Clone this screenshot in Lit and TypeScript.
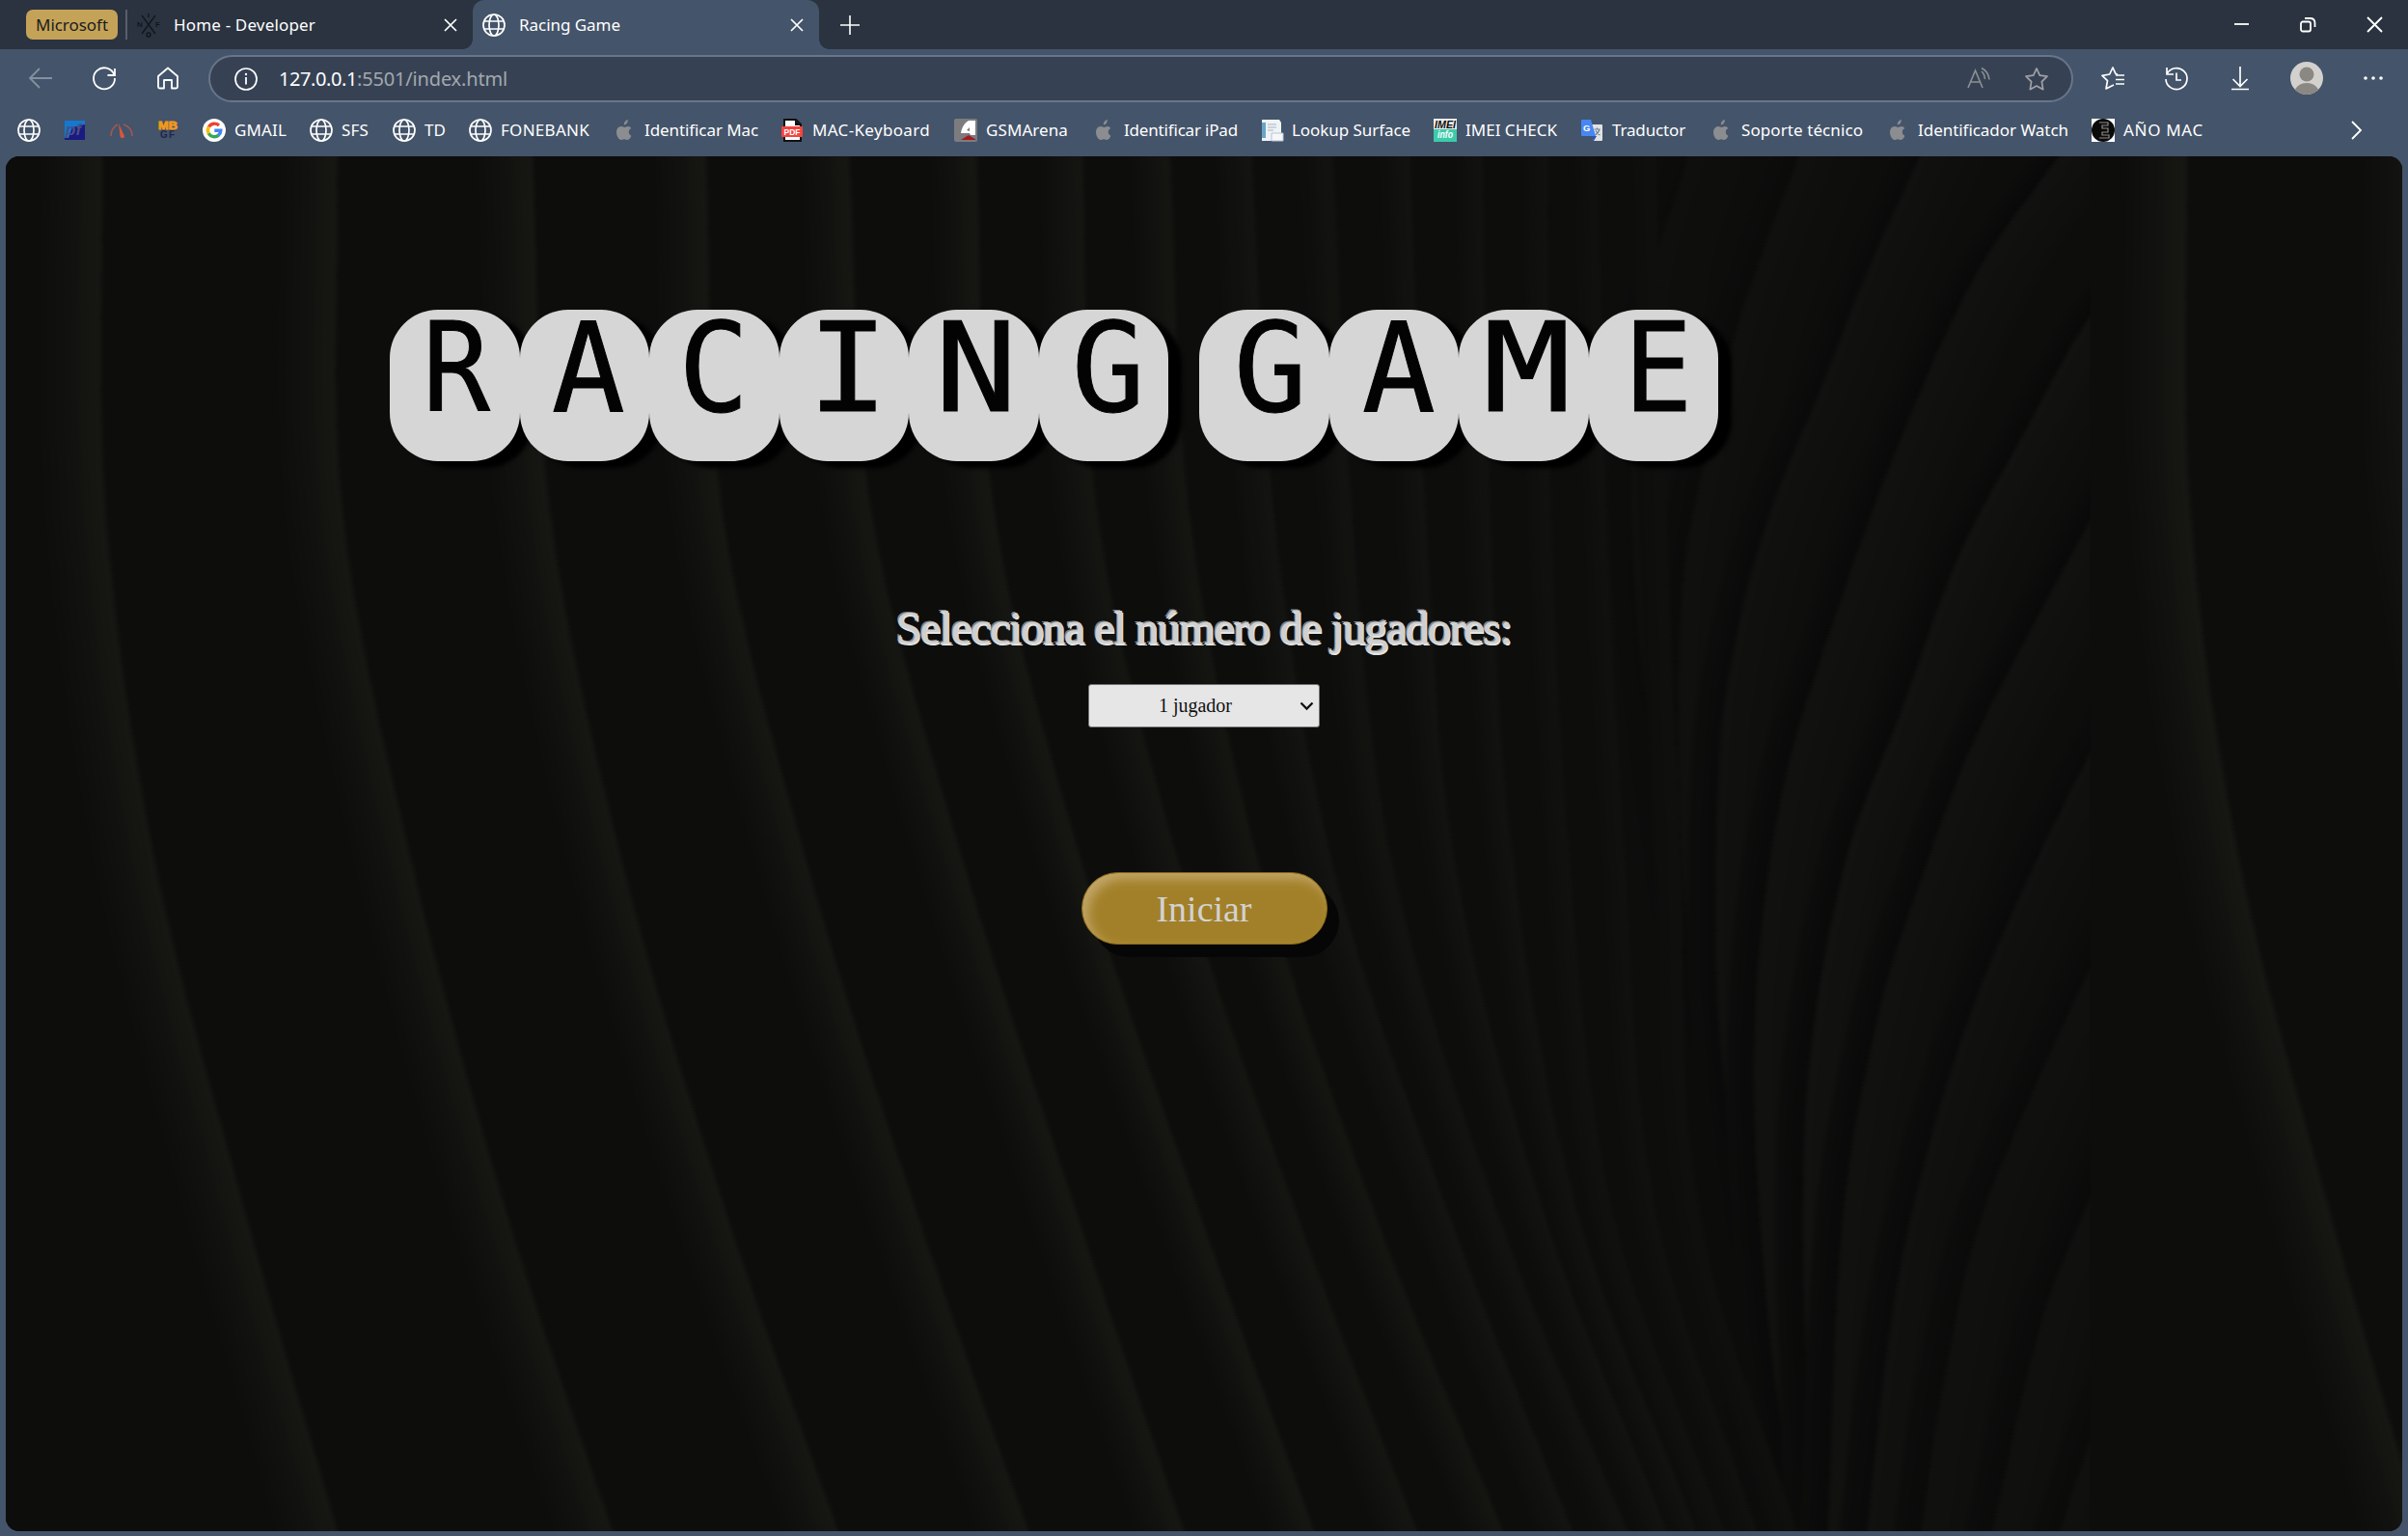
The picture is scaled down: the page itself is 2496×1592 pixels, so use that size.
import { LitElement, html, svg, css } from "lit";
import { customElement, property } from "lit/decorators.js";

/* A run of text set to an exact advance width by adjusting its tracking. */
@customElement("fit-text")
class FitText extends LitElement {
  @property({ type: Number }) width = 0;
  @property() text = "";
  static styles = css`
    :host { display: inline-block; white-space: pre; }
    .t { display: inline-block; }
  `;
  render() {
    return html`<span class="t">${this.text}</span>`;
  }
  firstUpdated() {
    const el = this.renderRoot.querySelector(".t") as HTMLElement;
    const natural = el.getBoundingClientRect().width;
    el.style.letterSpacing = `${(this.width - natural) / this.text.length}px`;
  }
}

const globe = svg`<g fill="none" stroke="#fff" stroke-width="1.7"><circle cx="12" cy="12" r="11"/><ellipse cx="12" cy="12" rx="5" ry="11"/><path d="M2 8h20M2 16h20"/></g>`;
const apple = svg`<g fill="#8b8d90"><path d="M16.3 8c-1.7-.1-3 .9-3.8.9-.9 0-2.100-.9-3.500-.8C5.800 8.200 4 10.800 4 14c0 3.900 2.600 8 4.700 8 1.200 0 1.800-.8 3.400-.8s2 .8 3.300.8c1.900 0 3.500-2.700 4-4.300-3.600-1.600-3.300-6.300-.1-7.700-.8-1.200-1.900-1.900-3-2z"/><path d="M15.800 1c.2 2.700-1.700 5.400-4 5.400C11.500 4 13.500 1.300 15.800 1z"/></g>`;
const icons: Record<string, unknown> = {
  globe,
  apple,
  pf: svg`<rect x="1" y="2" width="21" height="20" fill="#1a1a80"/><path d="M1 2h21v4L9 9 5 20H1z" fill="#1578d0"/><text x="2" y="17" font-family="Liberation Sans" font-style="italic" font-weight="700" font-size="17" fill="#4a4f83">pf</text>`,
  gauge: svg`<g fill="none" stroke="#a35852" stroke-width="1.500"><path d="M1 18C1 12 4 8 8 6M23 18C23 12 20 8 14 6"/></g><path d="M9 5l6 13c0 3-4 3-4.500 0z" fill="#d4583c"/>`,
  mb: svg`<text x="2" y="11" textLength="20" lengthAdjust="spacingAndGlyphs" font-family="Liberation Sans" font-weight="700" font-size="11" stroke="#f39a1a" stroke-width=".8" fill="#f39a1a">MB</text><text x="4" y="20" textLength="15" font-family="Liberation Sans" font-weight="700" font-size="10" fill="#20264c">GF</text>`,
  google: svg`<circle cx="12" cy="12" r="12" fill="#fff"/><g fill="none" stroke-width="3.400"><path d="M6.500 8.500A6.800 6.800 0 0 1 17 7" stroke="#ea4335"/><path d="M6.500 8.300a7 7 0 0 0 0 7.300" stroke="#fbbc05"/><path d="M6.300 15.400a6.800 6.800 0 0 0 10.300 1.700" stroke="#34a853"/><path d="M12.300 12.200h6.500a6.800 6.800 0 0 1-2.400 5" stroke="#4285f4"/></g>`,
  pdf: svg`<path d="M4 1h12l5 5v17H4z" fill="#fff" stroke="#111" stroke-width="2"/><path d="M15 1v6h6z" fill="#111"/><rect x="1" y="8" width="22" height="11" rx="1" fill="#f4453e"/><text x="3.500" y="17" textLength="17" font-family="Liberation Sans" font-weight="700" font-size="8.500" fill="#fff">PDF</text>`,
  gsm: svg`<rect width="24" height="24" rx="2" fill="#7c7c7f"/><path d="M15 2h7v15h-5l-1-2H7c1-6 4-11 8-13z" fill="#fff"/><path d="M13 12l3-3v4z" fill="#7c7c7f"/><path d="M15 17l8 5H7z" fill="#a31a1f"/>`,
  doc: svg`<path d="M2 1h18l2 3v19H2z" fill="#eef3f6"/><path d="M2 4h4v16H2z" fill="#6aa5c6"/><path d="M8 6h9M8 9h9M8 12h6" stroke="#c0c9d0" stroke-width="1.500"/><path d="M12 15h12v8H12z" fill="#f6f7f9" stroke="#bcc4cf"/>`,
  imei: svg`<rect width="24" height="24" fill="#eee"/><rect y="11" width="24" height="13" fill="#3ccbaa"/><text x="1" y="10" textLength="22" lengthAdjust="spacingAndGlyphs" font-family="Liberation Sans" font-style="italic" font-weight="700" font-size="11" fill="#111">IMEI</text><text x="4" y="20" textLength="16" lengthAdjust="spacingAndGlyphs" font-family="Liberation Sans" font-style="italic" font-weight="700" font-size="10" fill="#fff">info</text>`,
  translate: svg`<path d="M10 6h12q1 0 1 1v15q0 1-1 1h-8z" fill="#e1e2e4"/><path d="M12 18h5l-3 5z" fill="#2c50b8"/><path d="M2 1h9l5 17H2q-1 0-1-1V2q0-1 1-1z" fill="#4687f4"/><text x="3" y="13" font-family="Liberation Sans" font-weight="700" font-size="9.500" fill="#fff">G</text><path d="M14.500 11h6M17.500 9.500V11M20 11q-1 4-4.500 6M16 12.500q1.500 3 4.500 4.500" stroke="#6b7f95" fill="none" stroke-width="1.200"/>`,
  emac: svg`<rect width="24" height="24" fill="#fff"/><circle cx="12" cy="12" r="12" fill="#0a0a0a"/><path d="M8 4h9v3h-6v3h6v4h-6v3h7v3H8" fill="none" stroke="#938c86" stroke-width="1.200"/>`,
};

/* icon, item width up to the next icon, label, label width */
const bookmarks: [string, number, string, number][] = [
  ["globe", 48, "", 0],
  ["pf", 48, "", 0],
  ["gauge", 48, "", 0],
  ["mb", 48, "", 0],
  ["google", 111, "GMAIL", 54],
  ["globe", 86, "SFS", 28],
  ["globe", 79, "TD", 22],
  ["globe", 149, "FONEBANK", 92],
  ["apple", 174, "Identificar Mac", 118],
  ["pdf", 180, "MAC-Keyboard", 122],
  ["gsm", 143, "GSMArena", 85],
  ["apple", 174, "Identificar iPad", 118],
  ["doc", 180, "Lookup Surface", 123],
  ["imei", 152, "IMEI CHECK", 95],
  ["translate", 134, "Traductor", 76],
  ["apple", 183, "Soporte técnico", 126],
  ["apple", 213, "Identificador Watch", 156],
  ["emac", 110, "AÑO MAC", 83],
];

/* Folds of the backdrop: [y, x] points of each crest. */
type Curve = [number, number][];
const at = (...xs: number[]): Curve => xs.map((x, i) => [[0, 400, 800, 1200, 1568][i], x]);
const folds: [Curve, number, number][] = [
  [at(67, 69, 101, 160, 221), 40, 1],
  [at(220, 223, 268, 330, 400), 38, 1],
  [at(347, 358, 405, 473, 547), 36, 1],
  [at(460, 470, 525, 597, 671), 34, 1],
  [at(553, 567, 627, 701, 772), 32, 1],
  [at(636, 647, 704, 781, 857), 30, 1],
  [at(705, 714, 767, 844, 924), 28, 0.95],
  [at(762, 774, 819, 895, 980), 26, 0.9],
  [at(815, 829, 867, 943, 1025), 24, 0.8],
  [at(868, 880, 906, 975, 1061), 22, 0.7],
  [at(918, 928, 947, 1005, 1087), 20, 0.65],
  [at(965, 970, 985, 1027, 1106), 18, 0.6],
  [at(1008, 1010, 1022, 1050, 1124), 18, 0.5],
  [at(1040, 1046, 1058, 1078, 1145), 18, 0.4],
  [at(1078, 1085, 1094, 1106, 1171), 18, 0.3],
];
const fan: [Curve, number][] = [
  [[[0, 1099], [130, 1077], [400, 1062], [800, 1085], [1568, 1150]], 0.4],
  [[[0, 1171], [130, 1143], [233, 1125], [500, 1095], [900, 1100], [1568, 1160]], 0.6],
  [[[0, 1250], [134, 1215], [258, 1187], [388, 1156], [517, 1134], [672, 1120], [1000, 1120], [1568, 1165]], 0.75],
  [[[0, 1340], [129, 1288], [310, 1240], [496, 1200], [724, 1160], [1000, 1142], [1300, 1150], [1568, 1170]], 0.9],
  [[[100, 1400], [181, 1361], [310, 1319], [455, 1275], [620, 1240], [810, 1200], [1100, 1175], [1568, 1180]], 1],
  [[[340, 1385], [413, 1361], [548, 1319], [672, 1283], [810, 1253], [960, 1225], [1200, 1200], [1568, 1190]], 0.9],
  [[[600, 1385], [677, 1361], [810, 1323], [955, 1287], [1110, 1258], [1293, 1234], [1568, 1215]], 0.8],
  [[[840, 1385], [921, 1361], [1076, 1320], [1220, 1287], [1414, 1263], [1568, 1250]], 0.7],
  [[[1090, 1385], [1182, 1361], [1317, 1330], [1568, 1296]], 0.7],
  [[[1370, 1380], [1457, 1361], [1568, 1340]], 0.6],
];

function sample(c: Curve): Curve {
  const out: Curve = [];
  for (let i = 0; i < c.length - 1; i++) {
    const p0 = c[Math.max(0, i - 1)], p1 = c[i], p2 = c[i + 1], p3 = c[Math.min(c.length - 1, i + 2)];
    const h = p2[0] - p1[0];
    const m1 = ((p2[1] - p0[1]) / (p2[0] - p0[0])) * h;
    const m2 = ((p3[1] - p1[1]) / (p3[0] - p1[0])) * h;
    for (let k = i ? 1 : 0; k <= 8; k++) {
      const t = k / 8, t2 = t * t, t3 = t2 * t;
      out.push([
        p1[0] + h * t,
        (2 * t3 - 3 * t2 + 1) * p1[1] + (t3 - 2 * t2 + t) * m1 + (-2 * t3 + 3 * t2) * p2[1] + (t3 - t2) * m2,
      ]);
    }
  }
  return out;
}
function strip(c: Curve, from: number, to: number): string {
  const s = sample(c);
  const a = s.map(([y, x]) => `${(x + from).toFixed(1)} ${y.toFixed(1)}`);
  const b = s.map(([y, x]) => `${(x + to).toFixed(1)} ${y.toFixed(1)}`).reverse();
  return `M${a.concat(b).join("L")}Z`;
}
/* Opaque shade a number of levels above or below the base tone. */
function shade(delta: number): string {
  const v = Math.round(13 + delta);
  return `rgb(${v},${v},${Math.round(12 + delta * 0.75)})`;
}
/* Strips run from the widest (closest to the base tone) to the narrowest. */
const STEPS = 8;
const steps = Array.from({ length: STEPS }, (_, i) => (STEPS - i) / STEPS);

@customElement("fold-backdrop")
class FoldBackdrop extends LitElement {
  static styles = css`
    :host { display: block; }
    svg { display: block; width: 100%; height: 100%; }
  `;
  render() {
    return html`<svg viewBox="4 0 1560 1562" preserveAspectRatio="none">
      <defs>
        <clipPath id="c"><rect x="4" y="0" width="1357" height="1568" /></clipPath>
        <filter id="b" x="0" y="0" width="1" height="1" color-interpolation-filters="sRGB"><feGaussianBlur stdDeviation="1.200 0.5" /></filter>
        <g id="tile" clip-path="url(#c)">
          <g filter="url(#b)">
          <rect x="-20" y="-20" width="1400" height="1610" fill="#0d0d0c" />
          ${fan.map(([c, o]) => svg`
            ${steps.map((k) => svg`<path d=${strip(c, -18 * k, 0)} fill=${shade(-4 * o * (1.1 - k))} />`)}
            ${steps.map((k) => svg`<path d=${strip(c, 0, 50 * k)} fill=${shade(5 * o * (1.1 - k))} />`)}`)}
          ${folds.map(([c, w, o]) => svg`
            ${steps.map((k) => svg`<path d=${strip(c, -w * k, 0)} fill=${shade(9 * o * (1.1 - k))} />`)}`)}
          </g>
        </g>
      </defs>
      <use href="#tile" /><use href="#tile" x="1357" />
    </svg>`;
  }
}

/* letter, drawn width, offset of its centre within the tile */
type Letter = [string, number, number];
const words: Letter[][] = [
  [["R", 0.9, 2], ["A", 0.98, 4], ["C", 0.94, 0], ["I", 1.08, 4], ["N", 1.1, 3], ["G", 0.98, 5]],
  [["G", 0.98, 7], ["A", 0.98, 5], ["M", 1.18, 4], ["E", 0.92, 5]],
];

@customElement("app-root")
class AppRoot extends LitElement {
  static styles = css`
    :host { display: block; width: 2496px; height: 1592px; overflow: hidden; background: #44546a; font-family: "Noto Sans", "Open Sans", sans-serif; color: #fff; }
    * { box-sizing: border-box; }
    svg { display: block; flex: none; overflow: visible; }
    .page { display: flex; flex-direction: column; height: 1592px; }
    .tabs { height: 51px; background: #2a333f; display: flex; align-items: center; font-size: 17px; flex: none; }
    .group { margin-left: 27px; width: 95px; height: 31px; border-radius: 7px; background: #c4a359; color: #1c1c1c; display: flex; align-items: center; justify-content: center; }
    .sep { width: 2px; height: 31px; background: #56606c; margin: 0 10px 0 8px; }
    .tab { display: flex; align-items: center; width: 348px; }
    .tab fit-text { margin-left: 14px; flex: 1; }
    .tab.first { padding-right: 16px; }
    .tab.active { width: 359px; height: 51px; background: #44546a; border-radius: 12px 12px 0 0; padding: 0 16px 0 10px; position: relative; }
    .tab.active::before, .tab.active::after { content: ""; position: absolute; bottom: 0; width: 10px; height: 10px; }
    .tab.active::before { left: -10px; background: radial-gradient(circle at 0 0, transparent 9.5px, #44546a 10px); }
    .tab.active::after { right: -10px; background: radial-gradient(circle at 100% 0, transparent 9.5px, #44546a 10px); }
    .plus { margin-left: 21px; }
    .win { margin-left: auto; display: flex; }
    .win svg { margin-right: 24px; }
    .win svg + svg { margin-left: 24px; }
    .bar { height: 59px; padding: 6px 0 4px 21px; display: flex; align-items: flex-start; flex: none; }
    .nav { display: flex; align-items: center; height: 48px; }
    .nav svg { margin-right: 24px; }
    .addr { width: 1933px; height: 49px; margin-left: -3px; background: #364254; border: 2px solid #68758a; border-radius: 25px; display: flex; align-items: center; padding: 0 24px 0 25px; font-size: 20px; }
    .addr .host { margin-left: 22px; }
    .addr .path { color: #a4a8ae; flex: 1; }
    .addr svg + svg { margin-left: 36px; }
    .tools { display: flex; align-items: center; height: 48px; }
    .cell { width: 66px; display: flex; justify-content: center; }
    .cell.wide { width: 69px; }
    .tools .cell:first-child { margin-left: 8px; }
    .cell.photo { margin-left: 1px; }
    .marks { display: flex; align-items: center; height: 50px; padding: 0 0 0 18px; font-size: 17px; flex: none; }
    .mark { display: flex; align-items: center; gap: 9px; flex: none; }
    .mark fit-text { margin-bottom: 2px; }
    .more { margin-left: auto; padding-right: 48px; }
    .panel { margin: 2px 6px 5px; flex: 1; border-radius: 14px; overflow: hidden; position: relative; background: #0d0d0c; }
    fold-backdrop { position: absolute; inset: 0; }
    .game { position: relative; height: 100%; display: flex; flex-direction: column; align-items: center; font-family: "Liberation Serif", serif; }
    .title { align-self: flex-start; margin: 159px 0 0 398px; display: flex; gap: 32px; font: 400 129px/157px "DejaVu Sans Mono", monospace; color: #030303; height: 157px; }
    .word { display: flex; filter: drop-shadow(14px 7px 2px #000); }
    .tile { width: 134.5px; height: 157px; border-radius: 50px; background: #d6d6d6; display: flex; justify-content: center; }
    .glyph { display: block; line-height: 121px; -webkit-text-stroke: 1px #030303; }
    .ask { margin-top: 143px; height: 60px; line-height: 60px; font-size: 48px; color: #cfcfcf; text-shadow: 1px 1.5px 0 #e4e4e4, -1px 1px 0 #c8c8c8, -2px -1px 0 #858585; }
    .select { margin-top: 28px; width: 240px; height: 45px; background: #e6e6e6; border: 1.500px solid #757575; border-radius: 3px; display: flex; align-items: center; color: #111; font-size: 20px; padding: 0 5px 0 72px; justify-content: space-between; }
    .start { margin-top: 150px; width: 255px; height: 75px; border-radius: 38px; border: 1.5px solid #8e6b1b; background: #a28029; box-shadow: 12px 13px 0 #060606, inset 6px 6px 12px #c3a76a; color: #d2d2d2; font-size: 38px; display: flex; align-items: center; justify-content: center; }
  `;

  private close() {
    return svg`<svg width="14" height="14" viewBox="0 0 14 14"><path d="M1 1l12 12M13 1L1 13" stroke="#fff" stroke-width="1.700"/></svg>`;
  }

  render() {
    return html`<div class="page">
      <div class="tabs">
        <div class="group"><fit-text .width=${75} .text=${"Microsoft"}></fit-text></div>
        <div class="sep"></div>
        <div class="tab first">
          <svg width="24" height="24" viewBox="0 0 24 24"><g stroke="#10161d" stroke-width="1.300" fill="none"><path d="M5 2l14 19M19 2L5 21M12 0v4"/><circle cx="12" cy="22" r="2"/></g><g fill="#10161d" font-family="Liberation Sans" font-weight="700" font-size="8"><text x="0" y="14">N</text><text x="19" y="14">F</text></g></svg>
          <fit-text .width=${147} .text=${"Home - Developer"}></fit-text>
          ${this.close()}
        </div>
        <div class="tab active">
          <svg width="24" height="24" viewBox="0 0 24 24">${globe}</svg>
          <fit-text .width=${105} .text=${"Racing Game"}></fit-text>
          ${this.close()}
        </div>
        <svg class="plus" width="22" height="22" viewBox="0 0 22 22"><path d="M11 1v20M1 11h20" stroke="#fff" stroke-width="1.600"/></svg>
        <div class="win">
          <svg width="21" height="21" viewBox="0 0 21 21"><path d="M3 10h15" stroke="#fff" stroke-width="1.800"/></svg>
          <svg width="21" height="21" viewBox="0 0 21 21"><rect x="3" y="7.500" width="10" height="10" rx="2" fill="none" stroke="#fff" stroke-width="1.800"/><path d="M7 4h5.500q5 0 5 5v4" fill="none" stroke="#fff" stroke-width="1.800"/></svg>
          <svg width="21" height="21" viewBox="0 0 21 21"><path d="M3 3l15 15M18 3L3 18" stroke="#fff" stroke-width="1.900"/></svg>
        </div>
      </div>
      <div class="bar">
        <div class="nav">
          <svg width="42" height="24" viewBox="0 0 42 24"><path d="M33 12H10M20 2L10 12l10 10" fill="none" stroke="#8590a0" stroke-width="1.800"/></svg>
          <svg width="42" height="24" viewBox="0 0 42 24"><path d="M31.500 9A11 11 0 1 0 32 12M32 2v7h-7.500" fill="none" stroke="#fff" stroke-width="1.800"/></svg>
          <svg width="42" height="24" viewBox="0 0 42 24"><path d="M11 10L21 1.500 31 10V21q0 1.500-1.500 1.500H25V14h-8v8.500h-4.500Q11 22.500 11 21z" fill="none" stroke="#fff" stroke-width="1.800" stroke-linejoin="round"/></svg>
        </div>
        <div class="addr">
          <svg width="24" height="24" viewBox="0 0 24 24"><circle cx="12" cy="12" r="11" fill="none" stroke="#fff" stroke-width="1.700"/><path d="M12 10v7.500" stroke="#fff" stroke-width="1.800"/><circle cx="12" cy="7" r="1.200" fill="#fff"/></svg>
          <fit-text class="host" .width=${81} .text=${"127.0.0.1"}></fit-text><fit-text class="path" .width=${156} .text=${":5501/index.html"}></fit-text>
          <svg width="24" height="24" viewBox="0 0 24 24"><g fill="none" stroke="#8d9094" stroke-width="1.600"><path d="M1 21L8.500 3 16 21M3.500 15h10M15 4q3 2.500 3.500 8M15 .5q7 3.500 8 12"/></g></svg>
          <svg width="24" height="24" viewBox="0 0 24 24"><path d="M12 1l3.300 7.200 7.700 1-5.600 5.500 1.300 8L12 19l-6.700 3.700 1.300-8L1 9.200l7.700-1z" fill="none" stroke="#a0a2a5" stroke-width="1.700" stroke-linejoin="round"/></svg>
        </div>
        <div class="tools">
          <div class="cell"><svg width="24" height="24" viewBox="0 0 24 24"><path d="M17 8l-2-.3L12 1 8.700 8 1 9.300l5.500 5.400L5 23l8-4M15 9h9M15 13.500h9M15 18h9" fill="none" stroke="#fff" stroke-width="1.700" stroke-linejoin="round"/></svg></div>
          <div class="cell"><svg width="24" height="24" viewBox="0 0 24 24"><path d="M2 8a11 11 0 1 1-1 5M2 1v7h7M12 6.500v7.500h5" fill="none" stroke="#fff" stroke-width="1.700"/></svg></div>
          <div class="cell"><svg width="24" height="24" viewBox="0 0 24 24"><path d="M12 0v20M4.500 13L12 20.500l7.500-7.500M3 23.500h18" fill="none" stroke="#fff" stroke-width="1.700"/></svg></div>
          <div class="cell wide photo"><svg width="34" height="34" viewBox="0 0 34 34"><defs><clipPath id="av"><circle cx="17" cy="17" r="17"/></clipPath></defs><g clip-path="url(#av)"><rect width="34" height="34" fill="#d3d1ce"/><circle cx="17" cy="13" r="7.500" fill="#8b8782"/><ellipse cx="17" cy="33" rx="13" ry="11" fill="#8b8782"/></g></svg></div>
          <div class="cell wide"><svg width="22" height="6" viewBox="0 0 22 6"><g fill="#fff"><circle cx="3" cy="3" r="1.800"/><circle cx="11" cy="3" r="1.800"/><circle cx="19" cy="3" r="1.800"/></g></svg></div>
        </div>
      </div>
      <div class="marks">
        ${bookmarks.map(([icon, w, label, lw]) => html`<div class="mark" style="width:${w}px">
          <svg width="24" height="24" viewBox="0 0 24 24">${icons[icon]}</svg>
          ${label ? html`<fit-text .width=${lw} .text=${label}></fit-text>` : null}
        </div>`)}
        <div class="more"><svg width="11" height="18" viewBox="0 0 11 18"><path d="M1 0l9 9-9 9" fill="none" stroke="#fff" stroke-width="1.800"/></svg></div>
      </div>
      <div class="panel">
        <fold-backdrop></fold-backdrop>
        <div class="game">
          <div class="title">
            ${words.map((word) => html`<div class="word">${word.map(([ch, sx, dx]) => html`<span class="tile"><span class="glyph" style="transform:translateX(${dx}px) scaleX(${sx})">${ch}</span></span>`)}</div>`)}
          </div>
          <div class="ask"><fit-text .width=${638} .text=${"Selecciona el número de jugadores:"}></fit-text></div>
          <div class="select"><fit-text .width=${76} .text=${"1 jugador"}></fit-text><svg width="15" height="10" viewBox="0 0 15 10"><path d="M1.500 1.500l6 6 6-6" fill="none" stroke="#111" stroke-width="2.300"/></svg></div>
          <div class="start"><fit-text .width=${99} .text=${"Iniciar"}></fit-text></div>
        </div>
      </div>
    </div>`;
  }
}
